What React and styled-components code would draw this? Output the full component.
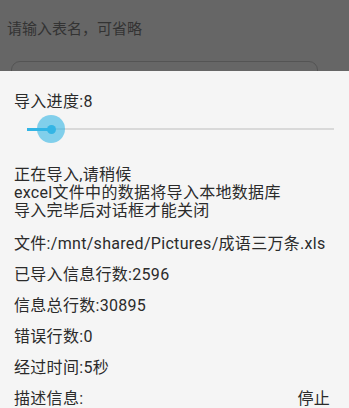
import React from "react";
import styled, { createGlobalStyle } from "styled-components";

const Global = createGlobalStyle`
  html, body { margin: 0; padding: 0; background: #f5f5f5; }
  body { font-family: Roboto, "Noto Sans CJK SC", sans-serif; overflow: hidden; }
`;

const Screen = styled.div`
  width: 349px;
  height: 408px;
  display: flex;
  flex-direction: column;
  overflow: hidden;
`;

const Backdrop = styled.div`
  height: 71px;
  flex: none;
  background: #666666;
  overflow: hidden;
  padding: 19px 0 0 7px;
  box-sizing: border-box;
`;

const Hint = styled.div`
  font-size: 15px;
  line-height: 20px;
  color: #333333;
`;

const InputBox = styled.div`
  margin: 22px 0 0 4px;
  width: 307px;
  height: 40px;
  border: 1px solid #545454;
  border-radius: 9px;
  box-sizing: border-box;
`;

const Sheet = styled.div`
  flex: 1;
  background: #f5f5f5;
  padding: 21px 19px 0 14px;
  color: #2b2b2b;
  font-size: 16px;
  letter-spacing: 0.3px;
`;

const Line = styled.div`
  line-height: ${(p) => p.$lh || 20}px;
  margin-top: ${(p) => p.$mt || 0}px;
  white-space: nowrap;
`;

const SliderWrap = styled.div`
  position: relative;
  height: 28px;
  margin: 3px -4px 0 13px;
`;

const Track = styled.div`
  position: absolute;
  left: 0;
  right: 0;
  top: 13px;
  height: 2px;
  background: #d9d9d9;
`;

const Active = styled.div`
  position: absolute;
  left: 0;
  top: 12.5px;
  height: 3px;
  background: #33b5e5;
`;

const Halo = styled.div`
  position: absolute;
  top: 0;
  width: 28px;
  height: 28px;
  margin-left: -14px;
  border-radius: 50%;
  background: rgba(51, 181, 229, 0.6);
  display: flex;
  align-items: center;
  justify-content: center;
`;

const Dot = styled.div`
  width: 9px;
  height: 9px;
  border-radius: 50%;
  background: #33b5e5;
`;

const Message = styled.div`
  margin-top: 23px;
`;

const Row = styled.div`
  display: flex;
  justify-content: space-between;
  line-height: 20px;
  margin-top: 11px;
`;

const StopButton = styled.span`
  color: #2b2b2b;
`;

export default function App() {
  const progress = 8;
  const thumb = 24;
  return (
    <Screen>
      <Global />
      <Backdrop>
        <Hint>请输入表名，可省略</Hint>
        <InputBox />
      </Backdrop>
      <Sheet>
        <Line>导入进度:{progress}</Line>
        <SliderWrap>
          <Track />
          <Active style={{ width: thumb }} />
          <Halo style={{ left: thumb }}>
            <Dot />
          </Halo>
        </SliderWrap>
        <Message>
          <Line $lh={18}>正在导入,请稍候</Line>
          <Line $lh={18}>excel文件中的数据将导入本地数据库</Line>
          <Line $lh={18}>导入完毕后对话框才能关闭</Line>
        </Message>
        <Line $mt={14}>文件:/mnt/shared/Pictures/成语三万条.xls</Line>
        <Line $mt={11}>已导入信息行数:2596</Line>
        <Line $mt={11}>信息总行数:30895</Line>
        <Line $mt={11}>错误行数:0</Line>
        <Line $mt={11}>经过时间:5秒</Line>
        <Row>
          <span>描述信息:</span>
          <StopButton>停止</StopButton>
        </Row>
      </Sheet>
    </Screen>
  );
}
